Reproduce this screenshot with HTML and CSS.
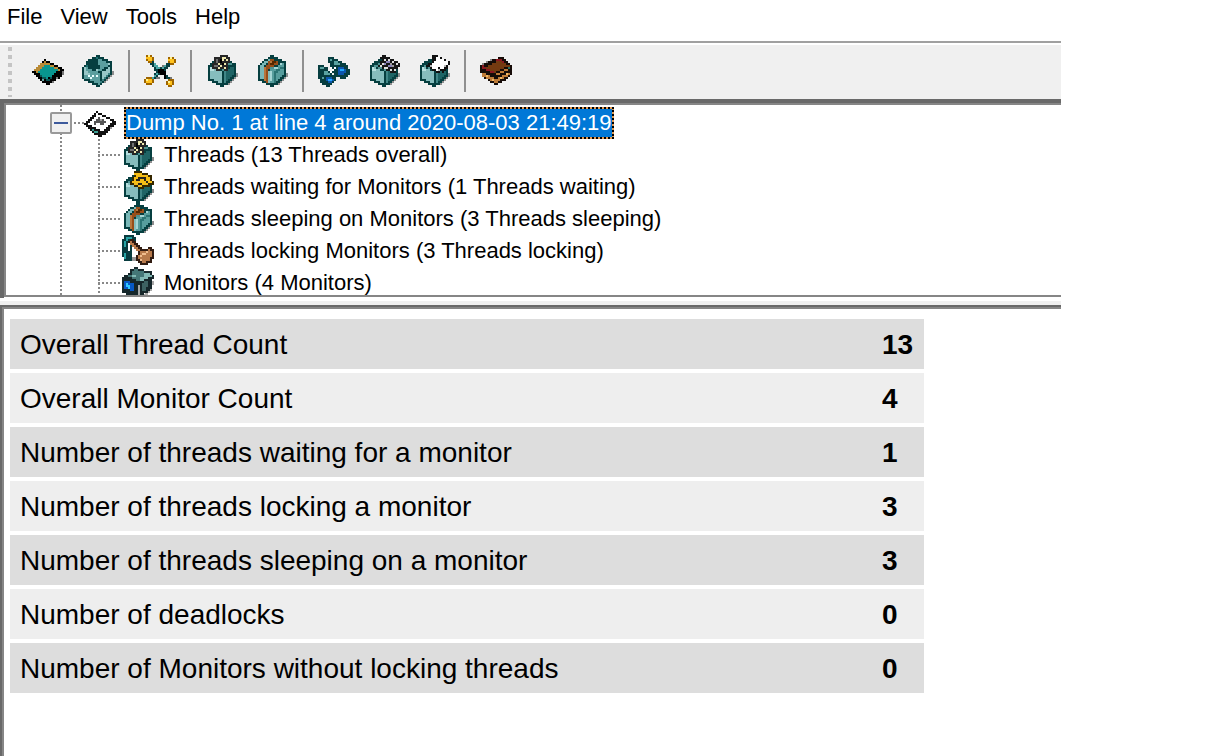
FILE: index.html
```html
<!DOCTYPE html>
<html lang="en">
<head>
<meta charset="utf-8">
<title>Thread dump analyzer</title>
<link rel="stylesheet" href="styles.css">
</head>
<body>
<svg class="defs" aria-hidden="true">
  <symbol id="cube" viewBox="0 0 16 16">
    <path fill="#8e8e8e" d="M15 9h1v2h-1v1h-1v1h-1v1h-1v1h-2v-2z"/>
    <path fill="#063f40" d="M7 1h2v1h2v1h2v1h2v7h-1v1h-1v1h-1v1h-1v1h-2v1H7v-1H5v-1H3v-1H1V5h1V4h1V3h2V2h2z"/>
    <path fill="#4d9292" d="M3 5h2V4h2V3h4v1h2v1h-2v1h-2v2H8V7H5V6H3z"/>
    <path fill="#86bdbd" d="M2 6h2v1h2v1h2v6H6v-1H4v-1H2z"/>
    <path fill="#b5dede" d="M2 6h1v1h1v1H2z"/>
    <path fill="#1f6465" d="M9 8h2V7h1V6h2v4h-1v1h-1v1h-1v1h-1v1H9z"/>
    <path fill="#408687" d="M9 8h1v6H9z"/>
  </symbol>
  <symbol id="chip" viewBox="0 0 16 16">
    <path fill="#000" d="M6 2h1v1h2v1h2v1h2v1h2v1h1v2h-1v2h-1v1h-2v1h-2v1H9v1H7v-1H5v-1H4v-1H3v-1H2v-1H1V9H0V8h1V7h1V6h1V5h1V4h1V3h1z"/>
    <path fill="#b98a35" d="M6 3h1v1h2v1h2v1h2v1h1v1h-1V7h-2V6H9V5H6v1H5v1H4v1H3v1H2V8H1V7h1V6h1V5h1V4h2z"/>
    <path fill="#08958f" d="M6 5h3v1h2v1h2v1h-1v1h-1v1h-1v1H8v1H7v-1H5v-1H4V9H3V8h1V7h1V6h1z"/>
    <path fill="#0c5554" d="M4 10h1v1h2v1h2v1H7v-1H5v-1H4zM9 11h1v1H9z"/>
    <path fill="#6ca6a4" d="M5 12h1v1H5z"/><path fill="#777" d="M12 11h1v1h-1zM10 13h1v1h-1zM15 8h1v2h-1z"/>
  </symbol>
  <symbol id="open-box" viewBox="0 0 16 16">
    <path fill="#8e8e8e" d="M15 8h1v2h-1v1h-1v1h-1v1h-1v1h-2v-2z"/>
    <path fill="#063f40" d="M7 0h2v1h2v1h2v1h2v7h-1v1h-1v1h-1v1h-1v1h-1v1H9v1H7v-1H5v-1H3v-1H1v-1H0V6h1V5h1V3h1V2h2V1h2z"/>
    <path fill="#1b6e6e" d="M7 1h1v1H7zM2 5h1v1H2z"/>
    <path fill="#5c9f9f" d="M8 2h2v1h2v1h2v1h-1v1h-2v1h-1v1H8V7h1V5H8z"/>
    <path fill="#9ccaca" d="M13 4h1v1h-1zM7 7h1v1H7z"/>
    <path fill="#5b9e9e" d="M1 6h2v1h2v1h3v1h1v6H8v-1H6v-1H4v-1H1z"/>
    <path fill="#97c7c7" d="M1 6h1v2h1v1h1v1H1zM10 8h2V7h1V6h1v3h-1v2h-1v1h-2z"/>
    <path fill="#3a8282" d="M13 9h1v1h-1v1h-1v1h-1v1h-1v1H9v-1h1v-1h1v-1h1v-1h1z"/>
    <path fill="#eaffff" d="M3 10h1v1H3zM5 10h1v1H5zM4 11h1v1H4zM7 10h1v1H7z"/>
  </symbol>
  <symbol id="cross" viewBox="0 0 16 16">
    <path fill="#777" d="M9 5h2V4h2v2h-2v2H9zM5 10h2v2H5zM10 10h2v1h2v2h-2v-1h-2zM7 12h1v-1H7z"/>
    <path fill="#073e40" d="M3 3h2v1h1v1h1v1h3V5h1V4h2v2h-1v1h-1v3h1v1h1v1h1v1h-2v-1h-1v-1h-1v-1H7v1H6v1H5v1H3v-2h2V9h1V8H5V6H4V5H3z"/>
    <path fill="#4ba6a5" d="M5 4h1v1h1v1h1v1H6V6H5zM4 11h1v-1h1V9h1v1H6v1H5v1H4zM10 5h1v1h-1v1H9V6h1z"/>
    <path fill="#000" d="M7 7h3v1h1v2H8V9H7zM10 10h1v2h-1z"/>
    <path fill="#9e6500" d="M1 0h3v1h1v2H4v1H2V3H1zM12 1h3v1h1v2h-1v1h-2V4h-1zM1 11h3v1h1v2H4v1H1v-1H0v-2h1zM12 12h3v3h-1v1h-2v-1h-1v-2h1z"/>
    <path fill="#ffc21c" d="M1 1h3v2H2V2H1zM12 2h3v2h-2V3h-1zM1 12h3v2H1zM12 13h2v2h-2z"/>
    <path fill="#fff28f" d="M2 0h1v1H2zM13 1h1v1h-1zM1 12h1v1H1zM12 13h1v1h-1z"/>
  </symbol>
  <symbol id="thread-box" viewBox="0 0 16 16">
    <use href="#cube"/>
    <path fill="#262626" d="M4 1h3V0h4v1h1v3h-1v4H9V7H7v1H5V7H3V4h1z"/>
    <path fill="#707070" d="M5 2h1v2H5zM4 5h2v1H4z"/>
    <path fill="#eee9ae" d="M8 1h2v1h1v1h-1V2H9v1H8zM6 4h1v1h1v1H7V5H6zM9 6h1v1H9zM6 6h1v1H6zM9 4h1v1H9z"/>
    <path fill="#000" d="M7 2h1v2H7zM8 4h1v1H8z"/>
  </symbol>
  <symbol id="sleep-box" viewBox="0 0 16 16">
    <use href="#cube"/>
    <path fill="#063f40" d="M6 1h1V0h2v1h2v1h2v1h2v3H4V2h2z"/>
    <path fill="#79b8b8" d="M2 5h1V4h1V3h2V2h3v1H7v1H5v1H4v7H2z"/>
    <path fill="#579d9d" d="M7 7h2V6h2V5h2V4h1v6h-1v1h-1v1h-1v1h-1v1H7z"/>
    <path fill="#a5d5d5" d="M7 8h1v5H7zM9 6h2v1H9zM12 4h1v1h-1z"/>
    <path fill="#2b7474" d="M9 8h1V7h2V6h2v1h-2v1h-1v1h-1v5H9z"/>
    <path fill="#984e1a" d="M7 2h2v1h2v2H9v1H7v1H6v7H5v-1H4V6h1V5h1V3h1z"/>
    <path fill="#b8763d" d="M4 6h1v7H4zM7 3h2v1H7z"/>
    <path fill="#552800" d="M7 4h1V3h2v1H9v1H7z"/>
  </symbol>
  <symbol id="binoculars" viewBox="0 0 16 16">
    <path fill="#073e40" d="M5 1h3v1h2v1h2v1h2v1h1v2h1v3h-1v1h-1v1h-3v-1H9v-1H8V9H7v1h2v3H8v1H7v1H6v1H4v-1H2v-1H1v-2H0V5h3v1h2v2h2V6H6V4H5z"/>
    <path fill="#5aa3a1" d="M6 2h1v1H6zM8 3h2v1h1v1H8zM1 6h2v1H1zM3 8h2v1h1v1H3zM2 11h1v1H2z"/>
    <path fill="#fff" d="M6 6h1v1H6zM7 7h1v1H7zM8 6h1v1H8zM6 8h1v1H6z"/>
    <path fill="#0c55ac" d="M10 6h3v1h1v2h-1v1h-3zM4 11h3v1h1v1H7v1H5v-1H4z"/>
    <path fill="#23a8ff" d="M11 7h2v1h-2zM5 12h2v1H5z"/>
  </symbol>
  <symbol id="film-box" viewBox="0 0 16 16">
    <use href="#cube"/>
    <path fill="#161616" d="M7 0h2v1h2v1h2v1h2v1h1v2h-1v1h-1v2h-3V8H9V7H7V6H5V5h1V3h1V2H6V1h1z"/>
    <path fill="#ddd" d="M8 2h1v1H8zM10 2h1v1h-1zM12 3h1v1h-1zM7 4h1v1H7zM6 5h1v1H6zM9 6h1v1H9zM8 6h1v1H8zM11 7h1v1h-1zM13 7h1v1h-1zM14 4h1v1h-1z"/>
    <path fill="#8982b9" d="M9 3h2v1H9zM10 5h2v1h-2zM8 4h1v1H8z"/>
    <path fill="#999" d="M12 5h1v1h-1zM11 4h1v1h-1z"/>
  </symbol>
  <symbol id="paper-box" viewBox="0 0 16 16">
    <use href="#cube"/>
    <path fill="#111" d="M7 0h3v1h2v1h2v1h2v2h-1v2h-1v1h-1v1h-1V8h-1v1H9V8H7V7H6V6H4V5h1V4h2z"/>
    <path fill="#fff" d="M9 1h2v1h2v1h2v2h-1v1h-1v1h-2V6h-1v2H9V7H7V6H6V5h1V4h1V3h1z"/>
    <path fill="#bbb" d="M10 7h1v1h-1zM13 5h1v1h-1zM6 5h1v1H6z"/>
  </symbol>
  <symbol id="book" viewBox="0 0 16 16">
    <path fill="#160c08" d="M9 1h3v1h1v1h1v1h1v1h1v5h-1v1h-1v1h-1v1h-2v1H9v1H7v-1H5v-1H4v-1H2v-1H1V9H0V5h1V4h2V3h3V2h3z"/>
    <path fill="#743a10" d="M6 4h2V3h3v1h2v1h2v1h-3v1h-2v1H8v1H6V8H4V7H2V6h2V5h2z"/>
    <path fill="#8b1820" d="M8 2h3v1h1v1h-1V3H8zM1 5h1v1h1v1h2v1h2v1H5V8H3V7H1z"/>
    <path fill="#bd7b38" d="M1 9h2v1h2v1h2v1h2v-1h2v-1h2V9h2v1h-1v1h-2v1h-2v1H9v1H7v-1H5v-1H3v-1H1zM8 9h2V8h2V7h2v1h-2v1h-2v1H8z"/>
    <path fill="#f3b864" d="M3 10h1v1H3zM6 12h1v1H6zM13 9h1v1h-1zM10 11h1v1h-1z"/>
    <path fill="#888" d="M5 2h1v1H5zM3 3h1v1H3zM1 4h1v1H1z"/>
    <path fill="#28705d" d="M14 6h1v1h-1z"/>
  </symbol>
  <symbol id="dump" viewBox="0 0 16 16">
    <path fill="#111" d="M6 2h1v1h2v1h2v1h2v1h2v1h1v2h-1v1h-1v1h-1v1h-1v1h-1v1H9v1H7v-1H5v-1H4v-1H3v-1H2v-1H1V9H0V8h1V7h1V6h1V5h1V4h1V3h1z"/>
    <path fill="#fff" d="M6 3h1v1h2v1h2v1h2v1h1v1h-1v1h-1v1h-1v1h-1v1H8v-1H6v-1H4v-1H2V8h1V7h1V6h1V5h1z"/>
    <path fill="#555" d="M7 5h1v1h2v1h1v1h-1v1H8V8H6v1H5V7h1V6h1z"/>
    <path fill="#3c9f94" d="M4 11h1v1h2v1H5v-1H4z"/><path fill="#999" d="M8 6h1v1H8zM13 10h1v1h-1z"/>
  </symbol>
  <symbol id="wait-box" viewBox="0 0 16 16">
    <use href="#cube"/>
    <path fill="#352700" d="M6 0h4v1h3v1h2v3h1v2h-2v1h-3v1H8V8H6V7H4V5h1V3h1z"/>
    <path fill="#f5bd16" d="M6 1h4v1h3v1h1v2h1v1h-2v1h-3v1H8V7H6V6H5V5h1V3h1V2H6z"/>
    <path fill="#2a251c" d="M8 3h4v2h-1V4H9v1H7V4h1zM8 6h2v1H8zM12 5h1v1h-1z"/>
  </symbol>
  <symbol id="lock" viewBox="0 0 16 16">
    <path fill="#083c3f" d="M1 0h5v1h1v2H5v10H1v-2H0V2h1z"/>
    <path fill="#28a4a5" d="M2 1h3v1H3v1H2v3H1V3h1zM1 9h1v3H1z"/><path fill="#fff" d="M3 4h1v4H3zM5 9h1v2H5z"/>
    <path fill="#999" d="M5 11h2v2H5z"/>
    <path fill="#311c12" d="M4 2h2v1h1v1h1v1h1v1h1v1h3V6h2v1h1v5h-1v2h-2v1H9v-1H8v-1H7v-3h1V8H7V7H6V6H5V5H4V4H3V3h1z"/>
    <path fill="#b77a4b" d="M4 3h1v1h1v1h1v1h1v1h1v1h4V7h1v1h1v3h-1v2h-2v1h-2v-1H9v-1H8v-2h1V8H7V7H6V6H5V5H4z"/>
    <path fill="#f0bd8e" d="M12 8h1v1h-1v1h-2v1H9v-1h1V9h2zM9 12h1v1H9z"/>
  </symbol>
  <symbol id="monitor-box" viewBox="0 0 16 16">
    <path fill="#aaa" d="M14 7h2v2h-1v3h-1v1h-1v1h-2z"/>
    <path fill="#16272b" d="M6 0h2v1h3v1h4v2h1v2h-1v5h-1v1h-1v1h-2v1h-1v1H8v1H6v-1H4v-1H2v-1H0V5h1V4h2V3h1V1h2z"/>
    <path fill="#447677" d="M6 1h2v1h3v1h3v1h-2v1h-1v1H9v1H7V6H5V5H3V4h2V2h1z"/>
    <path fill="#82b8b4" d="M11 3h3v1h1v1h-2v1h-2v1H9V5h2zM5 4h2v1H5z"/>
    <path fill="#0758c5" d="M1 7h3v1h2v4H4v-1H1z"/><path fill="#30c8ff" d="M2 8h1v1h1v2H3v-1H2z"/>
    <path fill="#a7aaaa" d="M8 9h1v5H8z"/><path fill="#3d6262" d="M10 8h1V7h2v3h-1v2h-2z"/>
  </symbol>
</svg>
<main class="app">
  <nav class="menu" aria-label="Main menu">
    <button>File</button><button>View</button><button>Tools</button><button>Help</button>
  </nav>
  <div class="toolbar" role="toolbar">
    <span class="grip"></span>
    <button aria-label="New"><svg class="icon"><use href="#chip"/></svg></button>
    <button aria-label="Open"><svg class="icon"><use href="#open-box"/></svg></button>
    <span class="separator"></span>
    <button aria-label="Preferences"><svg class="icon"><use href="#cross"/></svg></button>
    <span class="separator"></span>
    <button aria-label="Threads"><svg class="icon"><use href="#thread-box"/></svg></button>
    <button aria-label="Sleeping threads"><svg class="icon"><use href="#sleep-box"/></svg></button>
    <span class="separator"></span>
    <button aria-label="Find"><svg class="icon"><use href="#binoculars"/></svg></button>
    <button aria-label="Filters"><svg class="icon"><use href="#film-box"/></svg></button>
    <button aria-label="Categories"><svg class="icon"><use href="#paper-box"/></svg></button>
    <span class="separator"></span>
    <button aria-label="Manual"><svg class="icon"><use href="#book"/></svg></button>
  </div>
  <section class="tree-pane">
    <ul class="tree">
      <li>
        <div class="node root"><button class="toggle" aria-label="Collapse"></button><span class="stub"></span><svg class="icon"><use href="#dump"/></svg><span class="selected">Dump No. 1 at line 4 around 2020-08-03 21:49:19</span></div>
        <ul class="branch">
          <li class="node"><svg class="icon"><use href="#thread-box"/></svg><span>Threads (13 Threads overall)</span></li>
          <li class="node"><svg class="icon"><use href="#wait-box"/></svg><span>Threads waiting for Monitors (1 Threads waiting)</span></li>
          <li class="node"><svg class="icon"><use href="#sleep-box"/></svg><span>Threads sleeping on Monitors (3 Threads sleeping)</span></li>
          <li class="node"><svg class="icon"><use href="#lock"/></svg><span>Threads locking Monitors (3 Threads locking)</span></li>
          <li class="node"><svg class="icon"><use href="#monitor-box"/></svg><span>Monitors (4 Monitors)</span></li>
        </ul>
      </li>
    </ul>
  </section>
  <div class="divider"></div>
  <section class="details">
    <table class="summary">
      <tbody>
        <tr><th scope="row">Overall Thread Count</th><td>13</td></tr>
        <tr><th scope="row">Overall Monitor Count</th><td>4</td></tr>
        <tr><th scope="row">Number of threads waiting for a monitor</th><td>1</td></tr>
        <tr><th scope="row">Number of threads locking a monitor</th><td>3</td></tr>
        <tr><th scope="row">Number of threads sleeping on a monitor</th><td>3</td></tr>
        <tr><th scope="row">Number of deadlocks</th><td>0</td></tr>
        <tr><th scope="row">Number of Monitors without locking threads</th><td>0</td></tr>
      </tbody>
    </table>
  </section>
</main>
</body>
</html>
```
FILE: styles.css
```css
* { box-sizing: border-box; }
body {
  margin: 0;
  background: #fff;
  color: #000;
  font-family: "Liberation Sans", Arial, sans-serif;
  font-size: 22px;
}
button { border: 0; padding: 0; background: none; color: inherit; font: inherit; }
ul { list-style: none; margin: 0; padding: 0; }
.defs { display: block; width: 0; height: 0; }
.icon { display: block; flex: none; width: 32px; height: 32px; shape-rendering: crispEdges; }

.app { display: flex; flex-direction: column; min-height: 100vh; margin-right: 165px; }

.menu { display: flex; gap: 18px; padding: 5px 7px 12px; line-height: 24px; }
.menu button { height: 24px; }

.toolbar {
  display: flex;
  align-items: center;
  height: 58px;
  border-top: 2px solid #a0a0a0;
  background: #f0f0f0;
  box-shadow: inset 0 2px #fff;
}
.toolbar button { display: flex; justify-content: center; width: 50px; }
.grip {
  width: 4px;
  height: 50px;
  margin: 2px 11px 0 8px;
  background: repeating-linear-gradient(#c4c4c4 0 4px, transparent 4px 8px);
}
.separator { width: 2px; height: 42px; margin: 0 5px; background: #909090; }

.tree-pane {
  height: 199px;
  overflow: hidden;
  border: solid #696969;
  border-width: 4px 0 0 4px;
}
.tree {
  height: 194px;
  overflow: hidden;
  padding-top: 2px;
  border: 2px solid #868686;
  border-right: 0;
  background: repeating-linear-gradient(#888 0 2px, transparent 2px 4px) 54px 0 / 2px 100% no-repeat;
}
.node { display: flex; align-items: center; height: 32px; line-height: 32px; white-space: nowrap; }
.root { padding-left: 44px; }
.toggle {
  width: 22px;
  height: 22px;
  border: 2px solid #999;
  border-radius: 2px;
  background: linear-gradient(#3d5a9c, #3d5a9c) center / 14px 2px no-repeat, #f0f0f0;
}
.stub { width: 12px; height: 2px; background: repeating-linear-gradient(90deg, transparent 0 2px, #888 2px 4px); }
.selected {
  margin-left: 8px;
  border: 2px dotted #000;
  line-height: 28px;
  background: linear-gradient(#0078d7, #0078d7) padding-box, #e39b52 border-box;
  color: #fff;
}
.branch {
  margin-left: 92px;
  background: repeating-linear-gradient(#888 0 2px, transparent 2px 4px) 0 0 / 2px 100% no-repeat;
}
.branch .node { gap: 10px; }
.branch .node::before {
  content: "";
  width: 24px;
  height: 2px;
  margin-right: -10px;
  background: repeating-linear-gradient(90deg, #888 0 2px, transparent 2px 4px);
}

.divider { height: 7px; background: linear-gradient(#fff 0 3px, #f0f0f0 3px); }

.details {
  flex: 1;
  padding: 6px;
  border: solid #696969;
  border-width: 2px 0 0 2px;
  box-shadow: inset 2px 2px #868686;
}
.summary { width: calc(100% - 133px); margin: 2px 0 0 2px; border-spacing: 0 4px; font-size: 28px; }
.summary tr { background: #eee; }
.summary tr:nth-child(odd) { background: #ddd; }
.summary th, .summary td { height: 50px; padding: 2px 10px 0; text-align: left; line-height: 32px; }
.summary th { font-weight: normal; }
.summary td { width: 52px; font-weight: bold; }
```
